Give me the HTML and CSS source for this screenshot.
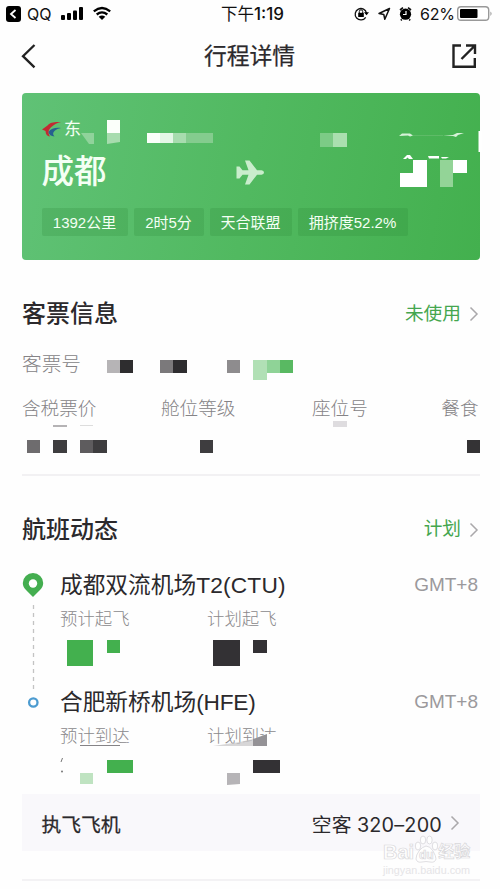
FILE: index.html
```html
<!DOCTYPE html>
<html lang="zh-CN">
<head>
<meta charset="utf-8">
<title>行程详情</title>
<link rel="stylesheet" href="styles.css">
</head>
<body>
<header class="status">
  <div class="status-side">
    <svg width="120" height="28" viewBox="0 0 120 28">
      <rect x="6" y="6" width="15" height="16" rx="3"/>
      <path d="M15.5 10l-4.500 4 4.500 4" fill="none" stroke="#fff" stroke-width="1.800"/>
      <rect x="61" y="15" width="4" height="5" rx="1"/><rect x="67" y="13" width="4" height="7" rx="1"/><rect x="73" y="10.500" width="4" height="9.500" rx="1"/><rect x="79" y="7" width="4" height="13" rx="1"/>
      <g fill="none" stroke="#000" stroke-width="2.300"><path d="M93.800 11.300q8.200-6.600 16.400 0M96.700 14.500q5.300-4.300 10.600 0"/></g>
      <path d="M98.700 16.700q3.300-2.200 6.600 0L102 20z"/>
    </svg>
    <span class="back-app">QQ</span>
  </div>
  <div class="clock">下午<b>1:19</b></div>
  <div class="status-side status-right">
    <svg width="60" height="28" viewBox="353 0 60 28">
      <path d="M365.700 17.300a5.700 5.700 0 1 1 .8-4" fill="none" stroke="#111" stroke-width="1.300"/>
      <path d="M364 12.300h5l-2.500 3z"/><rect x="358.200" y="12.800" width="5.600" height="4.200"/>
      <path d="M359.300 13v-1.500a1.700 1.700 0 0 1 3.400 0V13" fill="none" stroke="#111"/>
      <path d="M389.500 8.500l-10.500 5 4.800 1 1 4.800z" fill="none" stroke="#111" stroke-width="1.500" stroke-linejoin="round"/>
      <circle cx="405.500" cy="14.200" r="5.600"/><path d="M400 10l3-2.300M411 10l-3-2.300M401.800 19.300l-1 1M409.200 19.300l1 1" stroke="#111" stroke-width="1.700"/>
      <path d="M406 11v3.500h-3" fill="none" stroke="#fff" stroke-width="1.200"/>
    </svg>
    <span class="percent">62%</span>
    <svg width="38" height="28" viewBox="456 0 38 28">
      <rect x="457.700" y="6.700" width="31" height="13.600" rx="3.300" fill="#fff" stroke="#999" stroke-width="1.400"/>
      <rect x="460" y="9" width="17.500" height="9" rx="1"/><path d="M490.500 11.500q2 2 0 4.500z" fill="#888"/>
    </svg>
  </div>
</header>

<nav class="nav">
  <svg width="24" height="30" viewBox="18 41 24 30" fill="none" stroke="#222" stroke-width="2.300"><path d="M34.500 45L23 56.200l11.500 11.100"/></svg>
  <h1>行程详情</h1>
  <svg width="28" height="28" viewBox="451 42 28 28" fill="none" stroke="#222" stroke-width="2.400"><path d="M461 45.500h-7.500v21.300h21.300V58M466 45.500h9V54M475 45.500L461.500 59"/></svg>
</nav>

<section class="card">
  <div class="airline">
    <svg width="20" height="20" viewBox="41 119 20 20">
      <path d="M60 121c-6-.5-11.500.5-13.500 3.500L41 128.500l3.500 1.500c.2 3.500 1.500 5 4.500 5.500-2.500-4.500-1.500-7 2-10 2.500-2.200 5-3.500 9-4.500z" fill="#c22a32"/>
      <path d="M60 127c-5-.8-10 .2-12.500 4 .5 2.700 2.500 4.200 6 4.500-2-2-1.700-3.700 0-5.500 1.500-1.600 4-2.500 6.500-3z" fill="#26608f"/>
    </svg>
    <span>东</span>
  </div>
  <div class="route">
    <strong>成都</strong>
    <svg width="28" height="26" viewBox="236 157 28 26"><path d="M236.500 164.500h3l3 3.700h6L245 158.500h4.500l7.500 9.700h4.500q2.500.5 2.500 2.300t-2.500 2.300H257l-7.500 9.700H245l3.500-9.700h-6l-3 3.700h-3v-6z" fill="#c9edcc"/></svg>
  </div>
  <div class="chips"><span class="chip c1">1392公里</span><span class="chip c2">2时5分</span><span class="chip c3">天合联盟</span><span class="chip c4">拥挤度52.2%</span></div>
  <svg class="overlay" width="460" height="168" viewBox="22 93 460 168">
    <path d="M81 133h13v11h-5z" fill="#90d39b"/>
    <path d="M107 120h13v13h-13zM147 133h26v10h-26z" fill="#fbfffa"/><path d="M160 133h13v10h-13z" fill="#e4f7e6"/>
    <path d="M107 133h13v9l-13 2zM173 133h13v10h-13z" fill="#a7dcae"/><path d="M186 133h27v10h-27z" fill="#84cc8e"/>
    <path d="M320 133h13v14h-13z" fill="#7ccb86"/><path d="M333 133h14v14h-14z" fill="#aadfaf"/>
    <path d="M399 136l3-2.500h8l3 2-3 1-2-1zM443 135.500l10-.5 4-2h7l-6 2-2 2-3-1z" fill="#d6f2d8"/><path d="M413 135.500h30" stroke="#69be70" stroke-width=".7"/>
    <path d="M403 159l4-4h3l3 4h-4l-1.500-1.500L406 159zM428 156h11v2.500h-10zM441 157h8l-3 1.500h-4zM413 160h14v27h-27v-14h13zM453 160h14v13h-14z" fill="#fff"/>
    <path d="M440 160h13v27h-13z" fill="#93d497"/>
    <path d="M478.500 131h4v21h-4z" fill="#fff"/>
  </svg>
</section>

<section class="ticket">
  <div class="heading"><h2>客票信息</h2><span class="more">未使用</span><svg class="chev" width="12" height="18" viewBox="0 0 12 18"><path d="M2.500 2.500L9 9l-6.500 6.500"/></svg></div>
  <div class="ticket-no">客票号</div>
  <div class="labels"><span>含税票价</span><span>舱位等级</span><span>座位号</span><span>餐食</span></div>
  <svg class="overlay" width="458" height="180" viewBox="22 294 458 180" shape-rendering="crispEdges">
    <path d="M107 360h13v13h-13z" fill="#b6b4b6"/><path d="M120 360h13v13h-13zM173 360h14v13h-14z" fill="#2e2d2f"/><path d="M160 360h13v13h-13z" fill="#7b797b"/><path d="M227 360h13v13h-13z" fill="#8e8c8e"/>
    <path d="M253 360h14v20h-14z" fill="#b1e0b5"/><path d="M267 360h13v13h-13z" fill="#8fd397"/><path d="M280 360h13v13h-13z" fill="#59b962"/>
    <path d="M53 425h14v2h-14z" fill="#b5b3b5"/><path d="M80 425h13v1h-13z" fill="#ddd"/><path d="M333 421h14v6h-14z" fill="#dedcdf"/>
    <path d="M27 440h13v13h-13z" fill="#6e6c6e"/><path d="M53 440h14v13h-14zM93 440h14v13h-14zM200 440h13v13h-13z" fill="#3e3d3f"/><path d="M80 440h13v13h-13z" fill="#5e5c5e"/><path d="M467 440h13v13h-13z" fill="#343335"/>
  </svg>
</section>

<section class="flight">
  <div class="heading"><h2>航班动态</h2><span class="more">计划</span><svg class="chev" width="12" height="18" viewBox="0 0 12 18"><path d="M2.500 2.500L9 9l-6.500 6.500"/></svg></div>
  <div class="timeline">
    <svg class="rail" width="22" height="150" viewBox="22 565 22 150">
      <path d="M33 597l-6.500-6.500q-3.700-3.200-3.700-7.500a10.200 10 0 0 1 20.400 0q0 4.300-3.700 7.500z" fill="#44ae50"/><circle cx="33" cy="583.500" r="4.200" fill="#fff"/>
      <path d="M33.500 605v87" stroke="#c3c3c3" stroke-width="1.300" stroke-dasharray="4 4"/>
      <circle cx="33.300" cy="702.500" r="4.200" fill="#fff" stroke="#4c9bd0" stroke-width="2.300"/>
    </svg>
    <div class="stops">
      <div class="airport"><h3>成都双流机场<span class="latin">T2(CTU)</span></h3><span class="zone">GMT+8</span></div>
      <div class="times"><span>预计起飞</span><span>计划起飞</span></div>
      <div class="airport"><h3>合肥新桥机场<span class="latin hfe">(HFE)</span></h3><span class="zone">GMT+8</span></div>
      <div class="times"><span>预计到达</span><span>计划到达</span></div>
    </div>
  </div>
  <svg class="overlay" width="458" height="290" viewBox="22 504 458 290">
    <path d="M67 640h26v26H67zM107 640h13v13h-13zM107 760h26v13h-26z" fill="#43b04e"/>
    <path d="M213 640h27v26h-27zM253 640h14v13h-14zM253 760h27v13h-27z" fill="#333134"/>
    <path d="M80 773h13v11H80z" fill="#bfe3c1"/><path d="M227 773h13v11l-13 1z" fill="#b6b4b7"/>
    <path d="M80 745.500h40" stroke="#858386"/><path d="M213 746l27-4 13-3v7z" fill="#c9c8ca" opacity=".75"/><path d="M253 747v-7l14-6h11v13z" fill="#fefefe"/><path d="M253 739l14-5v12h-14z" fill="#949296"/>
    <path d="M62.500 758l-1.500 4" stroke="#777"/><circle cx="62" cy="771.500" r="1" fill="#777"/>
  </svg>
</section>

<section class="aircraft"><h4>执飞飞机</h4><span class="model">空客 <span class="model-no">320–200</span></span><svg class="chev" width="12" height="18" viewBox="0 0 12 18"><path d="M2.500 2.500L9 9l-6.500 6.500"/></svg></section>
<div class="end-line"></div>
<div class="watermark">
  <div class="mark-row"><span>Bai</span><svg width="24" height="29" viewBox="0 0 24 29"><g fill="#fff" stroke="#dddce0"><ellipse cx="4" cy="11" rx="2.700" ry="4"/><ellipse cx="9" cy="5" rx="2.700" ry="4"/><ellipse cx="15.500" cy="5" rx="2.700" ry="4"/><ellipse cx="21" cy="11" rx="2.700" ry="4"/><path d="M12 11q4 0 7 5t3 8q-1 4-6 3-4-1-8 0-5 1-6-3 0-4 3-8t7-5z"/></g><text x="5" y="24">du</text></svg><span class="mark-cn">经验</span></div>
  <div class="mark-url">jingyan.baidu.com</div>
</div>
</body>
</html>
```

FILE: styles.css
```css
* { box-sizing: border-box; }
body {
  margin: 0;
  width: 500px;
  height: 889px;
  overflow: hidden;
  position: relative;
  background: #fefefe;
  color: #2b292c;
  font-family: "Liberation Sans", "Noto Sans CJK SC", sans-serif;
}
h1, h2, h3, h4 { margin: 0; font-weight: 400; }
svg { display: block; flex: none; }
.status { display: flex; height: 28px; line-height: 28px; color: #111; font-family: Inter, "Noto Sans CJK SC", sans-serif; }
.status-side { position: relative; display: flex; width: 220px; }
.status-right { width: 147px; margin-left: auto; }
.back-app { position: absolute; left: 27px; top: 0; font-size: 16px; }
.clock { width: 66px; padding-left: 1px; font-size: 16.5px; white-space: nowrap; }
.clock b { font-weight: 500; font-size: 17px; }
.percent { width: 36px; margin-left: 7px; font-size: 16px; letter-spacing: -.2px; }
.nav { display: flex; align-items: center; justify-content: space-between; height: 56px; padding: 0 21px 0 18px; }
.nav h1 { font-size: 22.8px; line-height: 56px; margin-left: 6px; }
.nav h1, .aircraft h4 { -webkit-text-stroke: .25px currentColor; }
.card { position: relative; width: 458px; height: 167px; margin: 9px 0 0 21.5px; padding: 25px 20px 0; border-radius: 4px; color: #f4fff4; background: linear-gradient(100deg, #60c276 0%, #51b960 50%, #43b04e 100%); }
.airline { display: flex; align-items: center; height: 24px; font-size: 17px; line-height: 26px; }
.airline span { margin-left: 2.5px; }
.route { display: flex; align-items: center; height: 60px; }
.route strong { width: 194.500px; font-size: 32.5px; line-height: 60px; font-weight: 500; }
.chips { display: flex; gap: 6px; margin-top: 6px; }
.chip { height: 28px; line-height: 29px; text-align: center; font-size: 15px; white-space: nowrap; background: rgba(40, 130, 50, .2); border-radius: 2px; }
.c1 { width: 86px; }
.c2 { width: 70px; }
.c3 { width: 82px; }
.c4 { width: 110px; }
.overlay { position: absolute; left: 0; top: 0; pointer-events: none; }
.card .overlay { left: .5px; }
.ticket { position: relative; margin: 34px 20px 0 22px; height: 182px; border-bottom: 2px solid #f2f1f3; }
.heading { display: flex; align-items: center; height: 40px; }
.heading h2 { font-size: 24px; line-height: 42px; font-weight: 500; flex: 1; }
.more { color: #45a64f; font-size: 18.7px; line-height: 38px; margin: -1px 7px 0 0; }
.chev { fill: none; stroke: #aaa8ab; stroke-width: 1.500; }
.ticket-no { margin-top: 14px; height: 30px; line-height: 32px; font-size: 19.7px; font-weight: 300; color: #858386; }
.labels { display: grid; grid-template-columns: 139px 151px 1fr auto; margin: 15px 1.5px 0 0; height: 30px; line-height: 32px; font-size: 18.6px; font-weight: 300; color: #858386; }
.flight { position: relative; margin: 28px 20px 0 22px; height: 290px; }
.flight .heading { height: 51px; }
.timeline { display: flex; margin-top: 10px; }
.stops { flex: 1; margin-left: 16px; }
.airport { display: flex; align-items: center; justify-content: space-between; height: 40px; padding-right: 2px; }
.airport h3 { font-size: 22.7px; line-height: 42px; }
.latin { letter-spacing: .2px; }
.hfe { letter-spacing: -.2px; }
.zone { color: #9b999c; font-size: 19px; line-height: 42px; }
.times { display: grid; grid-template-columns: 147px auto; height: 77px; line-height: 28px; font-size: 17.4px; font-weight: 300; color: #8b898c; }
.aircraft { display: flex; align-items: center; margin: 0 20px 0 22px; height: 57px; padding: 1px 19px 0 19.5px; background: #f9f8fb; }
.aircraft h4 { flex: 1; font-size: 19.8px; }
.model { font-size: 19.8px; margin-right: 7px; }
.model-no { font-family: Inter, sans-serif; font-size: 19.8px; letter-spacing: .2px; }
.end-line { height: 2px; margin: 28px 20px 0 22px; background: #f3f2f4; }
.watermark { position: absolute; left: 383px; top: 835px; width: 92px; color: #fff; opacity: .9; }
.mark-row { display: flex; align-items: flex-end; height: 29px; font-size: 20px; line-height: 24px; font-weight: 700; -webkit-text-stroke: .7px #d5d4d7; }
.mark-row text { font-size: 12px; fill: #fff; stroke: #d5d4d7; stroke-width: .7; }
.mark-cn { font-size: 16px; }
.mark-url { font-size: 10.8px; line-height: 13px; color: #e3e2e5; white-space: nowrap; }
```
